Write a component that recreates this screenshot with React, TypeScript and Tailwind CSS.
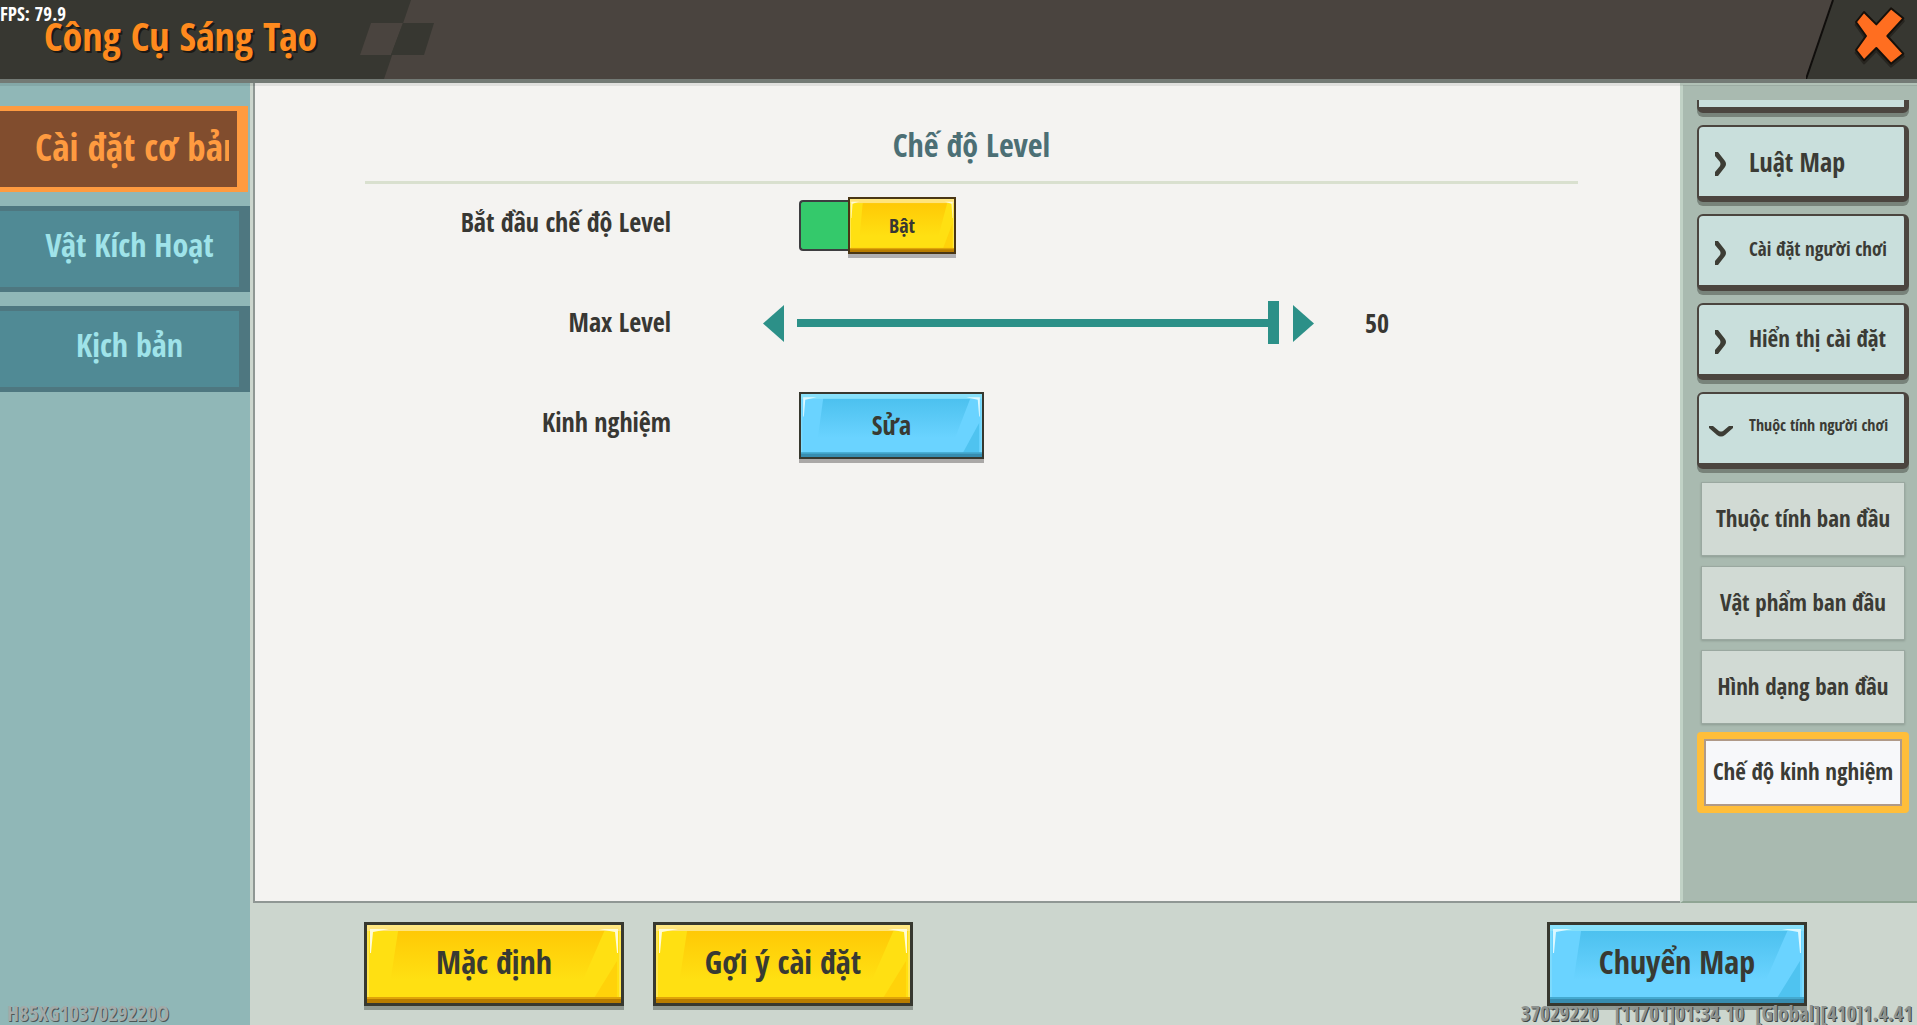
import React, { useState } from "react";
import clsx from "clsx";

type Tone = "yellow" | "blue";

const tabs = ["Cài đặt cơ bản", "Vật Kích Hoạt", "Kịch bản"];

const groups = [
  { label: "Luật Map", size: "text-[26px]", open: false },
  { label: "Cài đặt người chơi", size: "text-[19px] pb-1", open: false },
  { label: "Hiển thị cài đặt", size: "text-[23px] pb-1", open: false },
  { label: "Thuộc tính người chơi", size: "text-[16px] pb-2", open: true },
];

const subItems = [
  "Thuộc tính ban đầu",
  "Vật phẩm ban đầu",
  "Hình dạng ban đầu",
  "Chế độ kinh nghiệm",
];

// ---------------- GLOSS ----------------
const Gloss: React.FC<{ tone: Tone }> = ({ tone }) => {
  const yellow = tone === "yellow";
  const id = `gloss-${tone}`;
  return (
    <svg
      className="absolute inset-0 h-full w-full"
      viewBox="0 0 254 78"
      preserveAspectRatio="none"
      aria-hidden="true"
    >
      <defs>
        <linearGradient id={id} x1="0" y1="0" x2="0" y2="1">
          <stop offset="0.05" stopColor={yellow ? "#ffc805" : "#4bc0ee"} />
          <stop offset="0.7" stopColor={yellow ? "#ffe012" : "#6ad3ff"} />
        </linearGradient>
      </defs>
      <rect width="254" height="78" fill={yellow ? "#ffe012" : "#6ad3ff"} />
      <path d="M32 0H240L206 78H20Z" fill={`url(#${id})`} />
      <path d="M250 36V78H224Z" fill={yellow ? "#ffd20a" : "#4fc3f0"} />
      <rect width="254" height="6" fill={yellow ? "#ffe47c" : "#86e0fa"} />
      <rect y="72" width="254" height="3" fill={yellow ? "#dfa409" : "#44a9cf"} />
      <rect y="74" width="254" height="4" fill={yellow ? "#b87c00" : "#378db0"} />
      <path d="M1 72V1H253V72" fill="none" stroke={yellow ? "#ffec8a" : "#8fe2fb"} strokeWidth="1" />
      <path
        d="M3 4H22L6 7L4 28H3ZM251 4H232L248 7L250 28H251Z"
        fill={yellow ? "#fffbd6" : "#dbf8ff"}
      />
    </svg>
  );
};

// ---------------- BIG BUTTON ----------------
const GameButton: React.FC<{
  tone: Tone;
  className: string;
  children: React.ReactNode;
}> = ({ tone, className, children }) => (
  <button
    type="button"
    className={clsx(
      "relative shrink-0 cursor-pointer border-[#37382f] text-[#383a33]",
      className
    )}
  >
    <Gloss tone={tone} />
    <span className="relative">{children}</span>
  </button>
);

const Arrow: React.FC<{ left?: boolean }> = ({ left }) => (
  <svg className="h-[37px] w-[21px]" viewBox="0 0 21 37" aria-hidden="true">
    <path d={left ? "M21 0V37L0 18.500Z" : "M0 0V37L21 18.500Z"} fill="#2c9088" />
  </svg>
);

// ---------------- HEADER ----------------
const Header: React.FC = () => (
  <header className="relative z-10 flex h-[83px] items-stretch justify-between border-b-4 border-[#737a75] bg-[#4a443f] shadow-[0_3px_0_rgba(0,0,0,0.08)]">
    <span className="absolute left-0 top-1 text-[19px] leading-5 text-white">FPS: 79.9</span>
    <div className="flex">
      <div className="flex items-center bg-[#373731] pl-11">
        <h1 className="w-[276px] whitespace-nowrap pb-2 text-[40px] leading-[48px] text-[#ff8a1e] [text-shadow:2px_2px_0_#1c1a16]">
          Công Cụ Sáng Tạo
        </h1>
      </div>
      <svg className="h-[79px] w-[114px]" viewBox="0 0 114 79" aria-hidden="true">
        <path d="M0 0H91L64 79H0Z" fill="#373731" />
        <path d="M51 23H83L71 55H40Z" fill="#4a443f" />
        <path d="M83 23H114L104 55H71Z" fill="#373731" />
      </svg>
    </div>
    <div className="flex">
      <svg className="h-[79px] w-7" viewBox="0 0 28 79" aria-hidden="true">
        <path d="M27 0H28V79H0Z" fill="#373731" />
        <path d="M27 0L0 79" stroke="#100e0c" strokeWidth="2" />
      </svg>
      <div className="flex items-start bg-[#373731] pl-5 pr-3 pt-1">
        <button type="button" aria-label="Đóng" className="cursor-pointer">
          <svg className="h-[64px] w-[51px]" viewBox="582 14 153 192" aria-hidden="true">
            <path
              d="M612 46L649 83L693 35L730 65L682 118L730 171L693 201L649 154L612 191L588 160L618 118L588 76Z"
              fill="#272520"
              stroke="#272520"
              strokeWidth="8"
              strokeLinejoin="round"
            />
            <path
              d="M612 38L649 75L693 27L730 57L682 110L730 163L693 193L649 146L612 183L588 152L618 110L588 68Z"
              fill="#ff6e20"
              stroke="#15100b"
              strokeWidth="6"
              strokeLinejoin="round"
            />
          </svg>
        </button>
      </div>
    </div>
  </header>
);

// ---------------- LEFT TABS ----------------
const SideTabs: React.FC = () => {
  const [active, setActive] = useState(0);
  return (
    <nav className="flex w-[250px] shrink-0 flex-col bg-[#90b7b7] pt-[23px]">
      <div className="flex flex-col gap-[14px]">
        {tabs.map((tab, index) => (
          <button
            key={tab}
            type="button"
            onClick={() => setActive(index)}
            className={clsx(
              "h-[86px] cursor-pointer border-y-[5px] border-r-[11px] pl-5",
              index === active
                ? "mr-[2px] border-[#ff9b40] bg-[#814d2e] pr-2 text-[37px] text-[#ff9b40]"
                : "border-[#4e7780] bg-[#508a95] text-[32px] text-[#9fe3e9]"
            )}
          >
            <span
              className={clsx(
                "block overflow-hidden whitespace-nowrap leading-[52px]",
                index === active ? "ml-[15px] pb-1 text-left" : "pb-2 text-center"
              )}
            >
              {tab}
            </span>
          </button>
        ))}
      </div>
      <p className="mt-auto pl-[7px] text-[21px] leading-6 text-[#a3aaa9] [text-shadow:1px_1px_0_#4c5555]">
        H85XG1037029220O
      </p>
    </nav>
  );
};

// ---------------- SETTINGS ----------------
const Settings: React.FC = () => {
  const [enabled, setEnabled] = useState(true);
  const [level, setLevel] = useState(50);

  return (
    <main className="ml-[3px] flex-1 border-b-2 border-l-2 border-[#8f9794] bg-[#f4f3f1] pl-[110px] pr-[102px] pt-[35px] text-[#383733]">
      <h2 className="h-[66px] border-b-[3px] border-[#d9e0cf] text-center text-[32px] leading-[54px] text-[#4c6f75]">
        Chế độ Level
      </h2>
      <div className="grid grid-cols-[306px_1fr] gap-x-32 text-[26px]">
        <label htmlFor="level-mode" className="h-[100px] whitespace-nowrap pt-[18px] text-right leading-10">
          Bắt đầu chế độ Level
        </label>
        <div className="pt-[13px]">
          <label className="relative flex w-[157px] cursor-pointer items-center">
            <input
              id="level-mode"
              type="checkbox"
              role="switch"
              checked={enabled}
              onChange={() => setEnabled(!enabled)}
              className="absolute h-0 w-0 appearance-none"
            />
            <span className="h-[51px] w-[49px] rounded-l border-2 border-r-0 border-[#3d3d40] bg-[#34c96b]"></span>
            <span className="relative flex h-[57px] w-[108px] items-center justify-center border-2 border-[#4a3615] text-[20px] shadow-[0_4px_0_#b0afb2]">
              <Gloss tone="yellow" />
              <span className="relative">{enabled ? "Bật" : "Tắt"}</span>
            </span>
          </label>
        </div>

        <label htmlFor="max-level" className="h-[100px] whitespace-nowrap pt-[18px] text-right leading-10">
          Max Level
        </label>
        <div className="-ml-9 flex h-[78px] items-center">
          <button type="button" aria-label="Giảm" onClick={() => setLevel(Math.max(1, level - 1))}>
            <Arrow left />
          </button>
          <input
            id="max-level"
            type="range"
            min={1}
            max={50}
            value={level}
            onChange={(e) => setLevel(Number(e.target.value))}
            className="ml-[13px] mr-[14px] h-[43px] min-w-0 max-w-[482px] flex-1 appearance-none bg-transparent [&::-webkit-slider-runnable-track]:h-2 [&::-webkit-slider-runnable-track]:bg-[#2c9088] [&::-webkit-slider-thumb]:-mt-[18px] [&::-webkit-slider-thumb]:h-[43px] [&::-webkit-slider-thumb]:w-[11px] [&::-webkit-slider-thumb]:appearance-none [&::-webkit-slider-thumb]:bg-[#2c9088]"
          />
          <button type="button" aria-label="Tăng" onClick={() => setLevel(Math.min(50, level + 1))}>
            <Arrow />
          </button>
          <output htmlFor="max-level" className="ml-[51px]">
            {level}
          </output>
        </div>

        <span className="h-[100px] whitespace-nowrap pt-[18px] text-right leading-10">Kinh nghiệm</span>
        <div className="pt-2">
          <GameButton tone="blue" className="h-[67px] w-[185px] border-2 shadow-[0_4px_0_#aaa8a7]">
            Sửa
          </GameButton>
        </div>
      </div>
    </main>
  );
};

// ---------------- RIGHT MENU ----------------
const MenuBox: React.FC<{ children?: React.ReactNode }> = ({ children }) => (
  <button
    type="button"
    className="mb-1 flex h-[77px] w-full shrink-0 cursor-pointer items-center rounded-md border-b-[6px] border-l-2 border-r-[5px] border-t-2 border-[#4b453f] bg-[#c9dfdc] pl-[10px] shadow-[0_4px_0_#78837a]"
  >
    {children}
  </button>
);

const RightMenu: React.FC = () => {
  const [active, setActive] = useState(3);
  return (
    <aside className="flex w-[237px] shrink-0 flex-col border-b-2 border-l-[3px] border-t-2 border-b-[#8fa594] border-l-[#c1d2c6] border-t-[#c1d2c6] bg-[#a9bab0] pl-[14px] pr-2 pt-[15px]">
      {/* the list is scrolled down, only the foot of the first box is in view */}
      <div className="flex h-[25px] flex-col justify-end overflow-hidden pb-2">
        <MenuBox />
      </div>
      <div className="flex flex-col gap-2">
        {groups.map((group) => (
          <MenuBox key={group.label}>
            <svg className="mt-1 h-6 w-6 shrink-0" viewBox="0 0 24 24" aria-hidden="true">
              <path
                d={
                  group.open
                    ? "M0 7H4L10 12Q12 13 14 12L20 7H24V9L16 16Q12 19 8 16L0 9Z"
                    : "M6 0H9L16 9Q18 12 16 15L9 24H6V20L11 14Q12 12 11 10L6 4Z"
                }
                fill="#3d3d35"
              />
            </svg>
            <span className={clsx("ml-4 whitespace-nowrap text-left leading-10", group.size)}>
              {group.label}
            </span>
          </MenuBox>
        ))}
      </div>
      <div className="mt-[9px] flex flex-col gap-[10px] text-[23px]">
        {subItems.map((item, index) => (
          <button
            key={item}
            type="button"
            onClick={() => setActive(index)}
            className={clsx(
              "cursor-pointer whitespace-nowrap pb-[2px]",
              index === active
                ? "-mt-[2px] h-[81px] rounded-sm border-[7px] border-[#ffbe3a] bg-[#f7f8fa] shadow-[inset_0_0_0_2px_#b09a88]"
                : "mx-1 h-[74px] border border-[#9aa8a0] bg-[#d1dad4] shadow-[0_1px_2px_#8d9c93]"
            )}
          >
            {item}
          </button>
        ))}
      </div>
    </aside>
  );
};

// ---------------- PAGE ----------------
const App: React.FC = () => (
  <div className="flex min-h-screen flex-col bg-[#ccd6ce] font-['Open_Sans_Condensed','Noto_Sans','Open_Sans',sans-serif] font-medium text-[#3b3b35]">
    <Header />
    <div className="flex flex-1">
      <SideTabs />
      <div className="flex min-w-0 flex-1 flex-col">
        <div className="flex flex-1">
          <Settings />
          <RightMenu />
        </div>
        <footer className="relative flex h-[122px] items-start gap-[29px] pl-[114px] pr-[110px] pt-[19px] text-[32px]">
          <GameButton tone="yellow" className="h-[84px] w-[260px] border-[3px] pb-1 shadow-[0_4px_0_#8f9891]">
            Mặc định
          </GameButton>
          <GameButton tone="yellow" className="h-[84px] w-[260px] border-[3px] pb-1 shadow-[0_4px_0_#8f9891]">
            Gợi ý cài đặt
          </GameButton>
          <div className="ml-auto">
            <GameButton tone="blue" className="h-[84px] w-[260px] border-[3px] pb-1 shadow-[0_4px_0_#8f9891]">
              Chuyển Map
            </GameButton>
          </div>
          <p className="absolute bottom-0 right-1 flex gap-4 whitespace-nowrap text-[21px] leading-6 text-[#8d9390] [text-shadow:1px_1px_0_#3f4543]">
            <span>37029220</span>
            <span>[11/01]01:34 10&nbsp; [Global][410]1.4.41</span>
          </p>
        </footer>
      </div>
    </div>
  </div>
);

export default App;
